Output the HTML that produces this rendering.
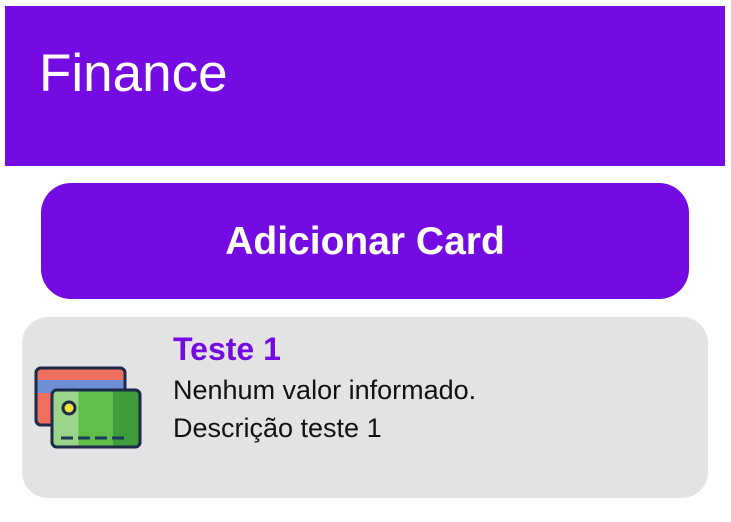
<!DOCTYPE html>
<html><head><style>
body{margin:0;width:731px;height:522px;background:#fff;font-family:"Liberation Sans",sans-serif;position:relative;overflow:hidden}
.h{position:absolute;left:5px;top:6px;width:720px;height:160px;background:#740be2}
.h span{position:absolute;left:34px;top:37px;font-size:53px;color:#fff}
.b{position:absolute;left:41px;top:183px;width:648px;height:116px;background:#740be2;border-radius:30px;color:#fff;font-weight:bold;font-size:39px;text-align:center;line-height:118px}
.c{position:absolute;left:22px;top:317px;width:686px;height:181px;background:#e3e3e3;border-radius:26px}
.t{position:absolute;left:173px;top:331px;font-size:32px;font-weight:bold;color:#740be2}
.l{position:absolute;left:173px;font-size:27px;color:#111}
</style></head><body>
<div class="h"><span>Finance</span></div>
<div class="b">Adicionar Card</div>
<div class="c"></div>
<div class="t">Teste 1</div>
<div class="l" style="top:375px">Nenhum valor informado.</div>
<div class="l" style="top:413px">Descrição teste 1</div>
<svg style="position:absolute;left:0;top:0" width="731" height="522">
<rect x="36" y="368" width="89" height="57" rx="5" fill="#ef6f5f" stroke="#1e2a4a" stroke-width="3"/>
<rect x="37.5" y="380" width="86" height="13" fill="#6e8fd6"/>
<rect x="36" y="368" width="89" height="57" rx="5" fill="none" stroke="#1e2a4a" stroke-width="3"/>
<rect x="52" y="390" width="88" height="57" rx="5" fill="#5fbf4a" stroke="#1e2a4a" stroke-width="3"/>
<rect x="53.5" y="391.5" width="25" height="54" fill="#9ad58a"/>
<rect x="113" y="391.5" width="25.5" height="54" fill="#3f9c3a"/>
<rect x="52" y="390" width="88" height="57" rx="5" fill="none" stroke="#1e2a4a" stroke-width="3"/>
<circle cx="69" cy="408" r="6" fill="#f3e23a" stroke="#1e2a4a" stroke-width="3"/>
<path d="M61 438h12M78 438h12M95 438h12M112 438h12" stroke="#1e3a5a" stroke-width="3"/>
</svg>
</body></html>
